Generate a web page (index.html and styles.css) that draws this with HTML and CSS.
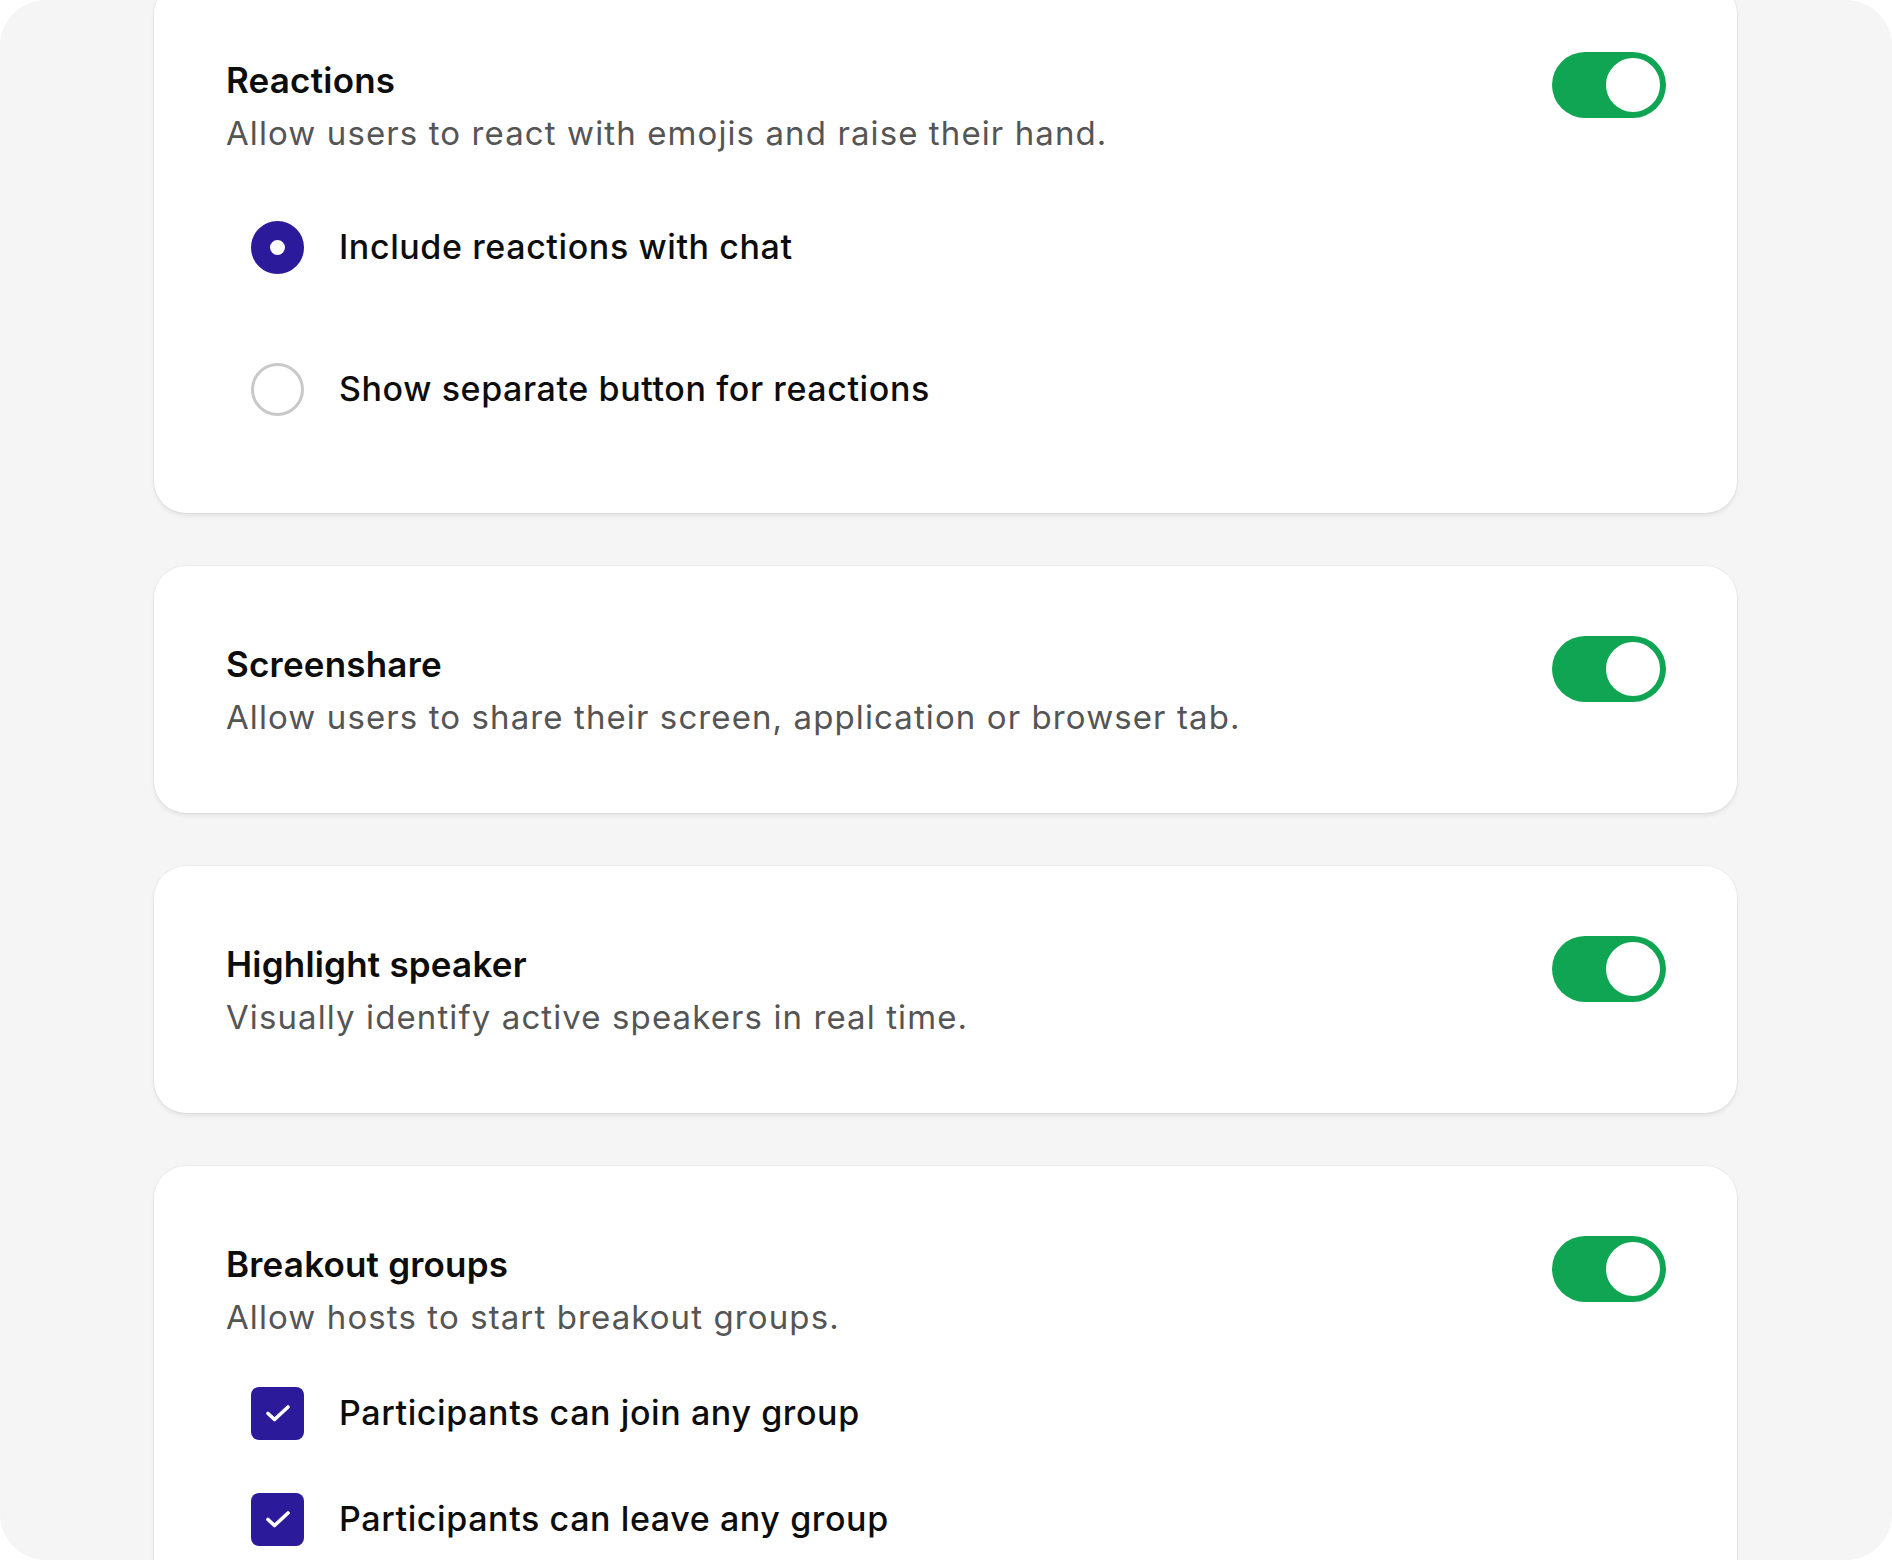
FILE: index.html
```html
<!DOCTYPE html>
<html lang="en">
<head>
<meta charset="utf-8">
<title>Settings</title>
<link rel="stylesheet" href="styles.css">
</head>
<body>
<div class="frame">
  <div class="list">
    <section class="card">
      <div class="head">
        <div class="text">
          <h2 class="title">Reactions</h2>
          <p class="desc">Allow users to react with emojis and raise their hand.</p>
        </div>
        <span class="toggle"><span class="knob"></span></span>
      </div>
      <div class="options radios">
        <label class="opt"><span class="radio checked"></span><span class="label">Include reactions with chat</span></label>
        <label class="opt"><span class="radio"></span><span class="label">Show separate button for reactions</span></label>
      </div>
    </section>

    <section class="card">
      <div class="head">
        <div class="text">
          <h2 class="title">Screenshare</h2>
          <p class="desc">Allow users to share their screen, application or browser tab.</p>
        </div>
        <span class="toggle"><span class="knob"></span></span>
      </div>
    </section>

    <section class="card">
      <div class="head">
        <div class="text">
          <h2 class="title">Highlight speaker</h2>
          <p class="desc">Visually identify active speakers in real time.</p>
        </div>
        <span class="toggle"><span class="knob"></span></span>
      </div>
    </section>

    <section class="card">
      <div class="head">
        <div class="text">
          <h2 class="title">Breakout groups</h2>
          <p class="desc">Allow hosts to start breakout groups.</p>
        </div>
        <span class="toggle"><span class="knob"></span></span>
      </div>
      <div class="options checks">
        <label class="opt"><span class="check"><svg viewBox="0 0 28 20" width="28" height="20"><path d="M4 10.5l6.5 6L24 4" fill="none" stroke="#fff" stroke-width="3.6" stroke-linecap="round" stroke-linejoin="round"/></svg></span><span class="label">Participants can join any group</span></label>
        <label class="opt"><span class="check"><svg viewBox="0 0 28 20" width="28" height="20"><path d="M4 10.5l6.5 6L24 4" fill="none" stroke="#fff" stroke-width="3.6" stroke-linecap="round" stroke-linejoin="round"/></svg></span><span class="label">Participants can leave any group</span></label>
      </div>
    </section>
  </div>
</div>
</body>
</html>
```

FILE: styles.css
```css
* { box-sizing: border-box; }
html, body {
  margin: 0;
  padding: 0;
  background: #ffffff;
}
body {
  font-family: Inter, "Noto Sans", "Liberation Sans", sans-serif;
  color: #111111;
}
.frame {
  width: 1892px;
  height: 1560px;
  background: #f5f5f5;
  border-radius: 46px;
  overflow: hidden;
  padding: 0 155px 0 154px;
}
.list {
  margin-top: -18px;
  display: flex;
  flex-direction: column;
  gap: 53px;
}
.card {
  background: #ffffff;
  border-radius: 32px;
  padding: 72px 71px 72px 72px;
  box-shadow: 0 0 0 1px rgba(0,0,0,0.035), 0 3px 4px rgba(0,0,0,0.07);
}
.head {
  display: flex;
  justify-content: space-between;
  align-items: flex-start;
}
.title {
  margin: 0;
  font-size: 35px;
  line-height: 52px;
  font-weight: 600;
  color: #0d0d0d;
  letter-spacing: 0.2px;
}
.desc {
  margin: 3px 0 0;
  font-size: 33px;
  line-height: 48px;
  font-weight: 400;
  color: #555555;
  letter-spacing: 1.1px;
}
.toggle {
  flex: none;
  width: 114px;
  height: 66px;
  border-radius: 33px;
  background: #0fa553;
  display: flex;
  align-items: center;
  justify-content: flex-end;
  padding: 3px;
  margin-top: -2px;
}
.knob {
  width: 60px;
  height: 60px;
  border-radius: 50%;
  background: #ffffff;
  border: 3px solid #0fa553;
}
.options {
  display: flex;
  flex-direction: column;
  padding-left: 25px;
}
.radios {
  padding-top: 64px;
  padding-bottom: 26px;
  gap: 90px;
}
.checks {
  padding-top: 46px;
  gap: 54px;
}
.opt {
  display: flex;
  align-items: center;
  gap: 35px;
  height: 52px;
}
.label {
  font-size: 34px;
  line-height: 52px;
  font-weight: 500;
  color: #0d0d0d;
  letter-spacing: 0.6px;
}
.radio {
  flex: none;
  width: 53px;
  height: 53px;
  border-radius: 50%;
  border: 3px solid #c9c9c9;
  background: #ffffff;
}
.radio.checked {
  border: 19px solid #2b1a9a;
}
.check {
  flex: none;
  width: 53px;
  height: 53px;
  border-radius: 8px;
  background: #2b1a9a;
  display: flex;
  align-items: center;
  justify-content: center;
}
```
